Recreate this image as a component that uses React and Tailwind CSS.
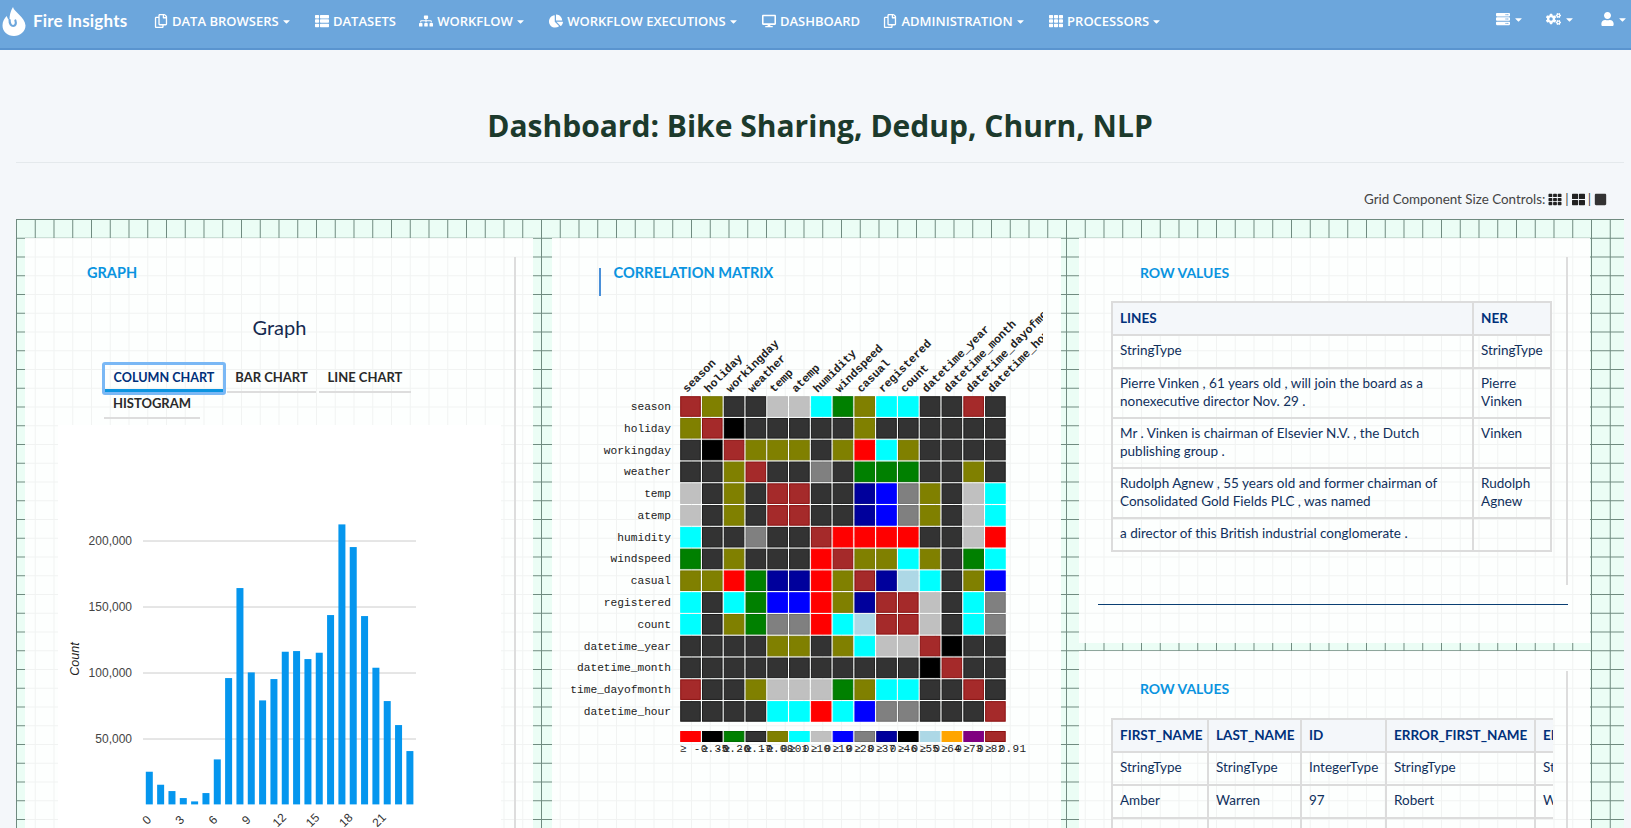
import {
  FaRegCopy,
  FaThList,
  FaSitemap,
  FaChartPie,
  FaDesktop,
  FaTh,
  FaThLarge,
  FaSquare,
  FaServer,
  FaCogs,
  FaUser,
  FaCaretDown,
} from "react-icons/fa";

const NAV_ITEMS = [
  { label: "DATA BROWSERS", icon: FaRegCopy, caret: true },
  { label: "DATASETS", icon: FaThList },
  { label: "WORKFLOW", icon: FaSitemap, caret: true },
  { label: "WORKFLOW EXECUTIONS", icon: FaChartPie, caret: true },
  { label: "DASHBOARD", icon: FaDesktop },
  { label: "ADMINISTRATION", icon: FaRegCopy, caret: true },
  { label: "PROCESSORS", icon: FaTh, caret: true },
];

const BAR_TOPS = [872, 911, 930, 951, 961, 936, 835, 591, 321, 574, 658, 594, 512, 510, 534, 515, 402, 130, 198, 405, 560, 660, 732, 810];

const CELL_COLORS = {
  K: ["#000000", "#000000"],
  D: ["#333333", "#1c1c1c"],
  O: ["#808000", "#767600"],
  R: ["#ff0000", "#ff0000"],
  C: ["#00ffff", "#00ffff"],
  G: ["#008000", "#007000"],
  S: ["#c0c0c0", "#bcbcbc"],
  B: ["#0000ff", "#0000ff"],
  A: ["#808080", "#707070"],
  N: ["#00009c", "#00008b"],
  L: ["#add8e6", "#add8e6"],
  W: ["#a52a2a", "#8b1010"],
  Y: ["#ffa500", "#ffa500"],
  P: ["#800080", "#800080"],
};

const MATRIX = [
  "WODDSSCGOCCDDWD",
  "OWKDDDDDODDDDDD",
  "DKWOOODORCODDDD",
  "DDOWDDADGGGDDOD",
  "SDODWWDDNBAODSC",
  "SDODWWDDNBAODSC",
  "CDDADDWRRRRDDSR",
  "GDODDDRWOOCODGC",
  "OORGNNROWNLCDOB",
  "CDCGBBRONWWSDCA",
  "CDOGAARCLWWSDCA",
  "DDDDOODOCSSWKDD",
  "DDDDDDDDDDDKWDD",
  "WDDOSSSGOCCDDWD",
  "DDDDCCRCBAADDDW",
];

const FIELDS = [
  "season",
  "holiday",
  "workingday",
  "weather",
  "temp",
  "atemp",
  "humidity",
  "windspeed",
  "casual",
  "registered",
  "count",
  "datetime_year",
  "datetime_month",
  "datetime_dayofmonth",
  "datetime_hour",
];

const LEGEND = "RKGDOCSBANKLYPW";
const LEGEND_LABELS = ["-0.35", "-0.26", "-0.17", "-0.08", "0.01", "0.10", "0.19", "0.28", "0.37", "0.46", "0.55", "0.64", "0.73", "0.82", "0.91"];

const PITCH = 21.78;

function Flame() {
  return (
    <svg viewBox="0 0 24 29" className="w-[24px] h-[29px]">
      <path
        d="M11 0 C12 5 23 10 23.5 18.5 C23.5 24.5 18 29 12 29 C5.5 29 0.5 24.5 0.5 18.5 C0.5 14.5 2.5 11 4.8 9 C5.4 11.5 6.2 12.5 7.5 13 C7.5 8 8.5 4 11 0 Z"
        fill="#ffffff"
      />
      <path
        d="M7.6 13 C7.4 17.5 9.5 19 11.2 19 C13.2 19 14.6 17 13.4 13.5"
        fill="none"
        stroke="#6ca6dc"
        strokeWidth="2.2"
        strokeLinecap="round"
      />
    </svg>
  );
}

function Heatmap() {
  // svg origin on the page is 570,300
  const ox = 109;
  const oy = 95;
  return (
    <svg width="472" height="470" className="block" style={{ fontFamily: '"Liberation Mono", monospace' }}>
      {FIELDS.map((name, i) => (
        <text
          key={name}
          transform={`translate(${116 + i * PITCH} 92) rotate(-45)`}
          fontSize="11.5"
          fontWeight="700"
          fill="#222222"
        >
          {name}
        </text>
      ))}
      {FIELDS.map((name, i) => (
        <text key={name} x="100" y={109 + i * PITCH} textAnchor="end" fontSize="11.2" fill="#222222">
          {name}
        </text>
      ))}
      {MATRIX.map((row, r) =>
        row.split("").map((c, i) => (
          <rect
            key={`${r}-${i}`}
            x={ox + i * PITCH + 0.7}
            y={oy + r * PITCH + 0.7}
            width="19.6"
            height="19.6"
            fill={CELL_COLORS[c][0]}
            stroke={CELL_COLORS[c][1]}
            strokeWidth="1"
          />
        ))
      )}
      {LEGEND.split("").map((c, i) => (
        <rect
          key={i}
          x={ox + i * PITCH + 0.7}
          y="430.5"
          width="19.6"
          height="10"
          fill={CELL_COLORS[c][0]}
          stroke={CELL_COLORS[c][1]}
        />
      ))}
      {LEGEND_LABELS.map((l, i) => (
        <text key={l} x={ox + i * PITCH} y="451" fontSize="11" letterSpacing="0.3" fill="#222222">
          {`≥ ${l}`}
        </text>
      ))}
    </svg>
  );
}

function ColumnChart() {
  // svg origin on the page is 58,424
  const grid = [
    { y: 116, label: "200,000" },
    { y: 182, label: "150,000" },
    { y: 248, label: "100,000" },
    { y: 314, label: "50,000" },
  ];
  const ticks = [0, 3, 6, 9, 12, 15, 18, 21];
  return (
    <svg width="443" height="404" className="block" style={{ fontFamily: '"Liberation Sans", sans-serif' }}>
      {grid.map((g) => (
        <g key={g.label}>
          <line x1="85" x2="358" y1={g.y} y2={g.y} stroke="#cccccc" />
          <text x="74" y={g.y + 4} textAnchor="end" fontSize="12" fill="#444444">
            {g.label}
          </text>
        </g>
      ))}
      {BAR_TOPS.map((top, i) => {
        const h = (970 - top) / 3;
        return <rect key={i} x={87.8 + i * 11.33} y={379.4 - h} width="7" height={h} fill="#0596ee" />;
      })}
      {ticks.map((t, i) => (
        <text
          key={t}
          transform={`translate(${91.5 + i * 33.2} 398) rotate(-45)`}
          textAnchor="middle"
          fontSize="12"
          fill="#333333"
        >
          {t}
        </text>
      ))}
      <text transform="translate(21 234) rotate(-90)" textAnchor="middle" fontSize="12.5" fontStyle="italic" fill="#222222">
        Count
      </text>
    </svg>
  );
}

function Th({ children }) {
  return <th className="border-2 border-[#dcdcdc] bg-[#f4f7fa] px-[7px] h-[33px] text-left font-bold text-[#00307a] whitespace-nowrap">{children}</th>;
}

function Td({ children }) {
  return <td className="border-2 border-[#dcdcdc] px-[7px] h-[33px] align-top pt-[5px] pb-[7px] leading-[18px]">{children}</td>;
}

function App() {
  return (
    <div className="h-screen overflow-hidden bg-[#f4f7fa]" style={{ fontFamily: 'Lato, sans-serif' }}>
      {/* NAVBAR */}
      <div className="h-[50px] bg-[#6ca6dc] border-b-2 border-[#5a94cf] flex text-white">
        <div className="flex items-start pl-[2px] pt-[7px] gap-[7px] w-[154px]">
          <Flame />
          <span className="text-[17px] leading-[28px] font-bold tracking-[0.2px]">Fire Insights</span>
        </div>
        <div className="flex items-start pt-[12px] gap-[23.3px] flex-1" style={{ fontFamily: '"Open Sans", sans-serif' }}>
          {NAV_ITEMS.map((item) => (
            <div key={item.label} className="flex items-center gap-[4px] text-[13px] leading-[18px] font-semibold">
              <item.icon className="w-[14px] h-[14px]" />
              <span>{item.label}</span>
              {item.caret && <FaCaretDown className="w-[11px] h-[11px] -ml-[2px]" />}
            </div>
          ))}
        </div>
        <div className="flex items-start pt-[12px] pr-[3px]">
          <div className="flex items-center gap-[3px]">
            <FaServer className="w-[14px] h-[14px]" />
            <FaCaretDown className="w-[11px] h-[11px]" />
          </div>
          <div className="flex items-center gap-[3px] ml-[22px]">
            <FaCogs className="w-[15px] h-[14px]" />
            <FaCaretDown className="w-[11px] h-[11px]" />
          </div>
          <div className="flex items-center gap-[3px] ml-[26px]">
            <FaUser className="w-[13px] h-[14px]" />
            <FaCaretDown className="w-[11px] h-[11px]" />
          </div>
        </div>
      </div>

      <div className="pl-4 pr-[7px]">
        {/* TITLE */}
        <h1 className="mt-[56px] h-[40px] leading-[40px] text-center text-[30px] font-bold text-[#1c3a2c]" style={{ fontFamily: '"Open Sans", sans-serif' }}>
          Dashboard: Bike Sharing, Dedup, Churn, NLP
        </h1>
        <div className="mt-[16px] border-t border-[#e4e9ec]"></div>

        {/* SIZE CONTROLS */}
        <div className="mt-[27px] h-[18px] flex items-center justify-end gap-[3px] pr-[17px] text-[13.4px] text-[#444444]">
          <span>Grid Component Size Controls:</span>
          <FaTh className="w-[14px] h-[13px] text-[#222222]" />
          <span>|</span>
          <FaThLarge className="w-[13px] h-[13px] text-[#222222]" />
          <span>|</span>
          <FaSquare className="w-[13px] h-[13px] text-[#333333]" />
        </div>

        {/* GRID */}
        <div className="mt-[11px] h-[610px] overflow-hidden pt-[19px] pl-[9px] grid grid-cols-[508px_509px_511px] gap-x-[18.5px] bg-[#ebfdf5] bg-[linear-gradient(#6f8a7f_1px,transparent_1px),linear-gradient(90deg,#6f8a7f_1px,transparent_1px)] bg-[length:18.75px_18.75px]">
          {/* GRAPH CARD */}
          <div className="bg-white/90 h-[700px]">
            <div className="mt-[19px] mr-[17px] pt-[8px] h-[660px] border-r-2 border-[#dddddd]">
              <div className="pl-[62px] text-[14.5px] leading-[16px] font-bold text-[#0a94e0]">GRAPH</div>
              <div className="mt-[36px] h-[20px] leading-[20px] pl-[20px] text-center text-[20px] text-[#15294f]">Graph</div>
              <div className="mt-[25px] ml-[77px] flex text-[13px] font-bold text-[#2a2a2a]">
                <div className="w-[124px] h-[33px] text-center rounded-[3px] border-[3px] border-[#7ab8f5] text-[#00307a] text-[12.6px]">
                  <div className="h-[27px] border-b-[3px] border-[#0a94e0] leading-[26px] -mb-px">COLUMN CHART</div>
                </div>
                <div className="ml-[1px] w-[89px] h-[31px] leading-[31px] text-center border-b-2 border-[#dddddd]">BAR CHART</div>
                <div className="ml-[3px] w-[92px] h-[31px] leading-[31px] text-center border-b-2 border-[#dddddd]">LINE CHART</div>
              </div>
              <div className="ml-[79px] w-[96px] h-[24px] leading-[16px] text-center text-[13px] font-bold text-[#2a2a2a] border-b-2 border-[#dddddd]">
                HISTOGRAM
              </div>
              <div className="mt-[6px] ml-[33px] w-[443px] bg-white">
                <ColumnChart />
              </div>
            </div>
          </div>

          {/* CORRELATION CARD */}
          <div className="bg-white/90 h-[700px]">
            <div className="mt-[30px] ml-[47px] h-[28px] border-l-2 border-[#4a90d9] pl-[13px] text-[14.6px] leading-[10px] font-bold text-[#0a94e0]">
              CORRELATION MATRIX
            </div>
            <div className="mt-[5px] ml-[19px]">
              <Heatmap />
            </div>
          </div>

          {/* ROW VALUES COLUMN */}
          <div className="flex flex-col gap-[8px]">
            <div className="bg-white/90 h-[405px]">
              <div className="mt-[19px] mr-[22px] pt-[8px] h-[328px] border-r-2 border-[#dddddd]">
                <div className="pl-[61px] text-[14px] leading-[16px] font-bold text-[#0a94e0]">ROW VALUES</div>
                <table className="mt-[20px] ml-[32px] w-[439px] table-fixed border-collapse text-[13.5px] text-[#10305c]">
                  <colgroup>
                    <col className="w-[361px]" />
                    <col className="w-[78px]" />
                  </colgroup>
                  <thead>
                    <tr>
                      <Th>LINES</Th>
                      <Th>NER</Th>
                    </tr>
                  </thead>
                  <tbody>
                    <tr>
                      <Td>StringType</Td>
                      <Td>StringType</Td>
                    </tr>
                    <tr>
                      <Td>Pierre Vinken , 61 years old , will join the board as a nonexecutive director Nov. 29 .</Td>
                      <Td>Pierre Vinken</Td>
                    </tr>
                    <tr>
                      <Td>Mr . Vinken is chairman of Elsevier N.V. , the Dutch publishing group .</Td>
                      <Td>Vinken</Td>
                    </tr>
                    <tr>
                      <Td>Rudolph Agnew , 55 years old and former chairman of Consolidated Gold Fields PLC , was named</Td>
                      <Td>Rudolph Agnew</Td>
                    </tr>
                    <tr>
                      <Td>a director of this British industrial conglomerate .</Td>
                      <Td></Td>
                    </tr>
                  </tbody>
                </table>
              </div>
              <div className="mt-[19px] ml-[19px] w-[470px] border-t border-[#0a3f73]"></div>
            </div>

            <div className="bg-white/90 h-[300px]">
              <div className="mt-[20px] mr-[22px] pt-[10px] h-[280px] border-r-2 border-[#dddddd]">
                <div className="pl-[61px] text-[14px] leading-[16px] font-bold text-[#0a94e0]">ROW VALUES</div>
                <div className="mt-[21px] ml-[32px] w-[442px] overflow-hidden">
                  <table className="w-[536px] table-fixed border-collapse text-[13.5px] text-[#10305c]">
                    <colgroup>
                      <col className="w-[96px]" />
                      <col className="w-[93px]" />
                      <col className="w-[85px]" />
                      <col className="w-[149px]" />
                      <col className="w-[113px]" />
                    </colgroup>
                    <thead>
                      <tr>
                        <Th>FIRST_NAME</Th>
                        <Th>LAST_NAME</Th>
                        <Th>ID</Th>
                        <Th>ERROR_FIRST_NAME</Th>
                        <Th>ERROR_LAST_NAME</Th>
                      </tr>
                    </thead>
                    <tbody>
                      <tr>
                        <Td>StringType</Td>
                        <Td>StringType</Td>
                        <Td>IntegerType</Td>
                        <Td>StringType</Td>
                        <Td>StringType</Td>
                      </tr>
                      <tr>
                        <Td>Amber</Td>
                        <Td>Warren</Td>
                        <Td>97</Td>
                        <Td>Robert</Td>
                        <Td>Warren</Td>
                      </tr>
                      <tr>
                        <Td>Robert</Td>
                        <Td>Mack</Td>
                        <Td>387</Td>
                        <Td>Matt</Td>
                        <Td>Mack</Td>
                      </tr>
                    </tbody>
                  </table>
                </div>
              </div>
            </div>
          </div>
        </div>
      </div>
    </div>
  );
}

export default App;
